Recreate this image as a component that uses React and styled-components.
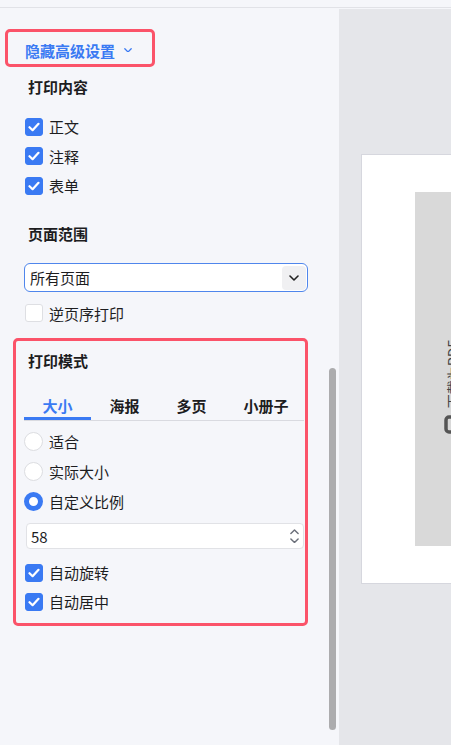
import React from 'react'
import styled, { createGlobalStyle } from 'styled-components'

const GlobalStyle = createGlobalStyle`
  html, body {
    margin: 0;
    padding: 0;
    overflow: hidden;
    background: #f5f6fa;
  }
  body {
    font-family: "Noto Sans CJK SC", "Noto Sans", sans-serif;
    color: #1d1d1f;
    font-size: 15px;
  }
`

const blue = '#3a7af3'
const red = '#fb5369'

const Page = styled.div`
  width: 451px;
  height: 745px;
  display: flex;
  flex-direction: column;
  overflow: hidden;
`

const TopBar = styled.div`
  height: 7px;
  flex-shrink: 0;
  background: #f5f6fa;
  border-bottom: 1px solid #e1e2e7;
`

const Main = styled.div`
  flex: 1;
  display: flex;
  min-height: 0;
`

const LeftPanel = styled.div`
  position: relative;
  width: 339px;
  flex-shrink: 0;
  background: #f5f6fa;
  display: flex;
  flex-direction: column;
  align-items: flex-start;
`

const ScrollThumb = styled.div`
  position: absolute;
  left: 329px;
  top: 360px;
  width: 7px;
  height: 362px;
  border-radius: 4px;
  background: #acacae;
`

const Highlight = styled.div`
  box-sizing: border-box;
  border: 3px solid ${red};
  border-radius: 5px;
`

const ToggleBox = styled(Highlight)`
  margin: 21px 0 0 5px;
  width: 150px;
  height: 38px;
  display: flex;
  align-items: center;
  padding: 4px 0 0 17px;
  color: ${blue};
  font-weight: 700;
  gap: 9px;
`

const SectionTitle = styled.div`
  height: 20px;
  line-height: 20px;
  font-weight: 700;
  margin: ${p => p.$mt ?? 0}px 0 0 ${p => p.$ml ?? 28}px;
`

const List = styled.div`
  display: flex;
  flex-direction: column;
  margin: ${p => p.$mt ?? 0}px 0 0 ${p => p.$ml ?? 25}px;
`

const Row = styled.label`
  display: flex;
  align-items: center;
  height: ${p => p.$h ?? 29.5}px;
  gap: ${p => p.$gap ?? 6}px;
`

const Box = styled.span`
  box-sizing: border-box;
  width: 18px;
  height: 18px;
  border-radius: 3px;
  display: flex;
  align-items: center;
  justify-content: center;
  background: ${p => (p.$on ? blue : '#fff')};
  border: 1px solid ${p => (p.$on ? blue : '#dedfe3')};
`

const Radio = styled.span`
  box-sizing: border-box;
  width: 19px;
  height: 19px;
  border-radius: 50%;
  background: #fff;
  border: ${p => (p.$on ? `5.5px solid ${blue}` : '1px solid #dcdde1')};
`

const Select = styled.div`
  box-sizing: border-box;
  margin: 19px 0 0 24px;
  width: 284px;
  height: 29px;
  border: 1.5px solid #4f86ec;
  border-radius: 6px;
  background: #fff;
  display: flex;
  align-items: center;
  padding: 0 1px 0 5px;
`

const SelectText = styled.span`
  flex: 1;
`

const SelectButton = styled.span`
  width: 24px;
  height: 24px;
  border-radius: 4px;
  background: #f0f0f2;
  display: flex;
  align-items: center;
  justify-content: center;
`

const ModeBox = styled(Highlight)`
  margin: 10px 0 0 13px;
  width: 295px;
  padding: 10px 1px 7px 8px;
  display: flex;
  flex-direction: column;
`

const Tabs = styled.div`
  display: flex;
  margin-top: 20px;
  border-bottom: 1px solid #d9dae0;
`

const Tab = styled.div`
  box-sizing: border-box;
  flex-shrink: 0;
  white-space: nowrap;
  height: 29px;
  padding: 2px 18.5px 0;
  display: flex;
  align-items: center;
  font-weight: 700;
  color: ${p => (p.$active ? blue : '#1d1d1f')};
  border-bottom: 3px solid ${p => (p.$active ? blue : 'transparent')};
`

const NumberInput = styled.div`
  box-sizing: border-box;
  margin: 7px 0 0 2px;
  height: 26px;
  border: 1px solid #e1e2e6;
  border-radius: 4px;
  background: #fff;
  display: flex;
  align-items: center;
  padding: 0 4px 0 4px;
`

const Spinner = styled.span`
  display: flex;
  flex-direction: column;
  gap: 3px;
`

const RightPanel = styled.div`
  flex: 1;
  margin-top: 1px;
  background: #e5e6ea;
  overflow: hidden;
`

const Sheet = styled.div`
  box-sizing: border-box;
  margin: 145px 0 0 22px;
  width: 300px;
  padding: 37px 0 37px 53px;
  background: #fff;
  border: 1px solid #d6d7de;
`

const Preview = styled.div`
  height: 354px;
  background: #d9d9d9;
  display: flex;
  flex-direction: column;
  align-items: flex-start;
  padding: 148px 0 0 29px;
  box-sizing: border-box;
  gap: 7px;
`

const VerticalText = styled.span`
  writing-mode: vertical-rl;
  text-orientation: sideways;
  transform: rotate(180deg);
  font-size: 14px;
  line-height: 18px;
  color: #444;
  white-space: nowrap;
`

const Check = () => (
  <svg width="12" height="10" viewBox="0 0 12 10">
    <path d="M1.5 5.2 L4.6 8.2 L10.5 1.8" fill="none" stroke="#fff" strokeWidth="2.2" strokeLinecap="round" strokeLinejoin="round" />
  </svg>
)

const Chevron = ({ color, w = 9, up }) => (
  <svg width={w} height={w * 0.6} viewBox="0 0 10 6">
    <path d={up ? 'M1 5 L5 1 L9 5' : 'M1 1 L5 5 L9 1'} fill="none" stroke={color} strokeWidth="1.6" strokeLinecap="round" strokeLinejoin="round" />
  </svg>
)

const CheckRow = ({ on, label, h }) => (
  <Row $h={h}>
    <Box $on={on}>{on && <Check />}</Box>
    <span>{label}</span>
  </Row>
)

const RadioRow = ({ on, label }) => (
  <Row $h={30} $gap={6}>
    <Radio $on={on} />
    <span>{label}</span>
  </Row>
)

export default function App() {
  return (
    <Page>
      <GlobalStyle />
      <TopBar />
      <Main>
        <LeftPanel>
          <ToggleBox>
            隐藏高级设置
            <Chevron color={blue} w={8} />
          </ToggleBox>

          <SectionTitle $mt={10}>打印内容</SectionTitle>
          <List $mt={15}>
            <CheckRow on label="正文" />
            <CheckRow on label="注释" />
            <CheckRow on label="表单" />
          </List>

          <SectionTitle $mt={23.5}>页面范围</SectionTitle>
          <Select>
            <SelectText>所有页面</SelectText>
            <SelectButton>
              <Chevron color="#222" w={10} />
            </SelectButton>
          </Select>
          <List $mt={6}>
            <CheckRow label="逆页序打印" h={30} />
          </List>

          <ModeBox>
            <SectionTitle $ml={4}>打印模式</SectionTitle>
            <Tabs>
              <Tab $active>大小</Tab>
              <Tab>海报</Tab>
              <Tab>多页</Tab>
              <Tab>小册子</Tab>
            </Tabs>
            <List $mt={5} $ml={0}>
              <RadioRow label="适合" />
              <RadioRow label="实际大小" />
              <RadioRow on label="自定义比例" />
            </List>
            <NumberInput>
              <SelectText>58</SelectText>
              <Spinner>
                <Chevron color="#6b6f7a" w={9} up />
                <Chevron color="#6b6f7a" w={9} />
              </Spinner>
            </NumberInput>
            <List $mt={9} $ml={1}>
              <CheckRow on label="自动旋转" h={29} />
              <CheckRow on label="自动居中" h={29} />
            </List>
          </ModeBox>

          <ScrollThumb />
        </LeftPanel>

        <RightPanel>
          <Sheet>
            <Preview>
              <VerticalText>下载为PDF</VerticalText>
              <svg width="20" height="19" viewBox="0 0 20 19">
                <rect x="2" y="2" width="16" height="15" rx="3" fill="none" stroke="#555" strokeWidth="3.5" />
              </svg>
            </Preview>
          </Sheet>
        </RightPanel>
      </Main>
    </Page>
  )
}
